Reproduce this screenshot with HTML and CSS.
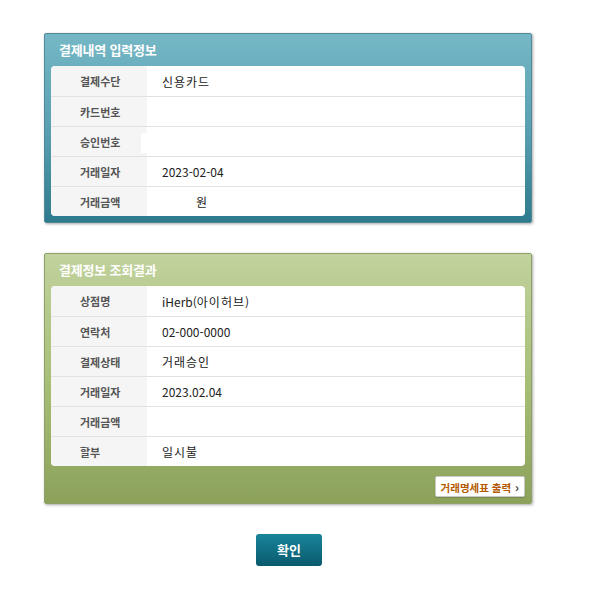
FILE: index.html
```html
<!DOCTYPE html>
<html lang="ko">
<head>
  <meta charset="UTF-8">
  <title>결제정보</title>
  <link rel="stylesheet" href="styles.css">
</head>
<body>
  <div class="wrap">

    <!-- 결제내역 입력정보 -->
    <div class="panel panel-blue">
      <h2 class="panel-title">결제내역 입력정보</h2>
      <table class="info">
        <tr><th>결제수단</th><td><span class="ko">신용카드</span></td></tr>
        <tr><th>카드번호</th><td></td></tr>
        <tr><th>승인번호</th><td class="masked"><span class="mask"></span></td></tr>
        <tr><th>거래일자</th><td>2023-02-04</td></tr>
        <tr><th>거래금액</th><td><span class="amount"></span><span class="ko">원</span></td></tr>
      </table>
    </div>

    <!-- 결제정보 조회결과 -->
    <div class="panel panel-green">
      <h2 class="panel-title">결제정보 조회결과</h2>
      <table class="info">
        <tr><th>상점명</th><td>iHerb(<span class="ko">아이허브</span>)</td></tr>
        <tr><th>연락처</th><td>02-000-0000</td></tr>
        <tr><th>결제상태</th><td><span class="ko">거래승인</span></td></tr>
        <tr><th>거래일자</th><td>2023.02.04</td></tr>
        <tr><th>거래금액</th><td></td></tr>
        <tr><th>할부</th><td><span class="ko">일시불</span></td></tr>
      </table>
      <div class="panel-foot">
        <a href="#" class="receipt-btn">거래명세표 출력 <span class="arrow">&rsaquo;</span></a>
      </div>
    </div>

    <div class="actions">
      <a href="#" class="ok-btn">확인</a>
    </div>

  </div>
</body>
</html>
```

FILE: styles.css
```css
/* ------------------------------
   BASIC
------------------------------ */
* {
  box-sizing: border-box;
  margin: 0;
  padding: 0;
}

body {
  font-family: "Noto Sans CJK KR", "Noto Sans", sans-serif;
  background: #fff;
  color: #222;
}

.wrap {
  width: 488px;
  margin: 33px 0 0 44px;
}

/* ------------------------------
   PANELS
------------------------------ */
.panel {
  border: 1px solid #5e8f9a;
  border-radius: 2px;
  padding: 0 6px 6px;
  box-shadow: 1px 1px 3px rgba(0, 0, 0, 0.35);
  margin-bottom: 30px;
}

.panel-blue {
  background: linear-gradient(to bottom, #75b7c5 0%, #5aa0b2 50%, #2e7a8d 100%);
  border-color: #4f8a98;
}

.panel-green {
  background: linear-gradient(to bottom, #c1d29d 0%, #a8bf78 50%, #8ca25a 100%);
  border-color: #8ea266;
}

.panel-title {
  height: 32px;
  line-height: 32px;
  padding-left: 8px;
  font-size: 13px;
  font-weight: bold;
  color: #fff;
  letter-spacing: -0.2px;
}

/* ------------------------------
   INFO TABLE
------------------------------ */
.info {
  width: 100%;
  border-collapse: separate;
  border-spacing: 0;
  background: #fff;
  border-radius: 4px;
  overflow: hidden;
}

.info th,
.info td {
  height: 30px;
  border-top: 1px solid #e2e2e2;
  vertical-align: middle;
}

.info tr:first-child th,
.info tr:first-child td {
  border-top: none;
}

.info th {
  width: 96px;
  background: #f5f5f5;
  text-align: left;
  padding-left: 29px;
  font-size: 11px;
  font-weight: bold;
  color: #555;
}

.info tr:first-child th { border-top-left-radius: 4px; }
.info tr:last-child th { border-bottom-left-radius: 4px; }

.info td {
  padding-left: 15px;
  font-size: 12px;
  color: #222;
}

.info .ko {
  letter-spacing: 1px;
}

.info td.masked {
  position: relative;
}

/* white input box that overlaps the label cell */
.mask {
  position: absolute;
  left: -6px;
  top: 6px;
  width: 120px;
  height: 20px;
  background: #fff;
}

.amount {
  display: inline-block;
  width: 34px;
}

/* ------------------------------
   FOOTER / BUTTONS
------------------------------ */
.panel-foot {
  display: flex;
  justify-content: flex-end;
  padding-top: 10px;
}

.receipt-btn {
  display: inline-block;
  height: 21px;
  line-height: 19px;
  padding: 0 5px;
  background: #fff;
  border: 1px solid #c9c9c9;
  border-radius: 2px;
  font-size: 10.5px;
  font-weight: bold;
  color: #b35a00;
  text-decoration: none;
  box-shadow: 0 1px 1px rgba(0, 0, 0, 0.15);
}

.receipt-btn .arrow {
  color: #333;
  font-size: 12px;
  margin-left: 1px;
}

.actions {
  display: flex;
  padding-left: 212px;
}

.ok-btn {
  display: block;
  width: 66px;
  height: 32px;
  line-height: 32px;
  text-align: center;
  border-radius: 3px;
  background: linear-gradient(to bottom, #1a8499, #0a5a6e);
  color: #fff;
  font-size: 13px;
  font-weight: bold;
  text-decoration: none;
}
```
